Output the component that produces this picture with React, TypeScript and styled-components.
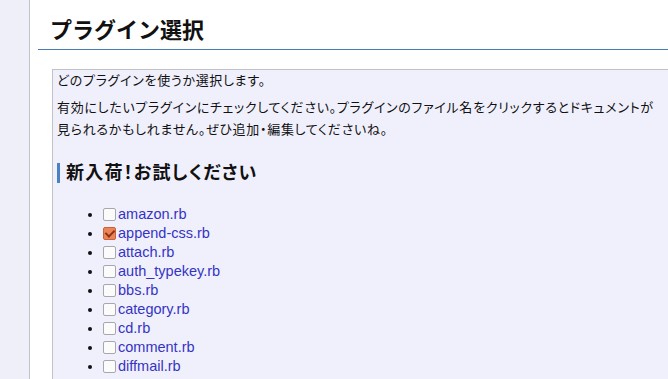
import React, { useState } from 'react';
import styled, { createGlobalStyle } from 'styled-components';

const GlobalStyle = createGlobalStyle`
  html, body {
    margin: 0;
    padding: 0;
    background: #fff;
    overflow: hidden;
  }
  body {
    font-family: "Liberation Sans", "Noto Sans CJK JP", sans-serif;
    font-size: 13px;
    color: #111;
  }
`;

const plugins = [
  'amazon.rb',
  'append-css.rb',
  'attach.rb',
  'auth_typekey.rb',
  'bbs.rb',
  'category.rb',
  'cd.rb',
  'comment.rb',
  'diffmail.rb',
  'disp_referrer.rb',
  'dropdown_calendar.rb',
];

const App = () => {
  const [checked, setChecked] = useState<Record<string, boolean>>({ 'append-css.rb': true });

  const toggle = (name: string) => {
    setChecked({ ...checked, [name]: !checked[name] });
  };

  return (
    <>
      <GlobalStyle />
      <Page>
        <Sidebar />
        <Main>
          <Title>プラグイン選択</Title>
          <Panel>
            <Text>どのプラグインを使うか選択します。</Text>
            <Text>
              有効にしたいプラグインにチェックしてください。プラグインのファイル名をクリックするとドキュメントが見られるかもしれません。ぜひ追加・編集してくださいね。
            </Text>
            <Section>新入荷！お試しください</Section>
            <PluginList>
              {plugins.map((name) => (
                <PluginItem key={name}>
                  <Check
                    type="checkbox"
                    checked={!!checked[name]}
                    onChange={() => toggle(name)}
                  />
                  <PluginLink href="#">{name}</PluginLink>
                </PluginItem>
              ))}
            </PluginList>
          </Panel>
        </Main>
      </Page>
    </>
  );
};

export default App;

const Page = styled.div`
  display: flex;
  height: 100vh;
  overflow: hidden;
`;

const Sidebar = styled.div`
  width: 29px;
  flex: none;
  background: #efeffa;
  border-right: 1px solid #c4c4c8;
`;

const Main = styled.div`
  flex: 1;
  min-width: 0;
  padding-left: 8px;
  overflow: hidden;
`;

const Title = styled.h1`
  margin: 17px 0 0;
  padding: 0 0 4px 12px;
  font-size: 22px;
  line-height: 28px;
  font-weight: bold;
  border-bottom: 1px solid #4a7ab4;
`;

const Panel = styled.div`
  margin: 19px -20px 0 14px;
  padding: 0 4px 20px;
  background: #f0f0fc;
  border: 1px solid #c2c2c6;
`;

const Text = styled.p`
  margin: 0 0 5px;
  line-height: 22px;
  font-size: 13px;
  font-feature-settings: "palt";
  letter-spacing: 0.7px;
  max-width: 606px;
`;

const Section = styled.h3`
  margin: 22px 0 0 0;
  padding-left: 6px;
  border-left: 3px solid #4a80c4;
  font-size: 18px;
  line-height: 20px;
  font-weight: bold;
  font-feature-settings: "palt";
  letter-spacing: 1.2px;
`;

const PluginList = styled.ul`
  margin: 22px 0 0;
  padding-left: 46px;
  list-style: disc;
`;

const PluginItem = styled.li`
  line-height: 19px;
  font-size: 14.5px;
`;

const Check = styled.input`
  appearance: none;
  width: 13px;
  height: 13px;
  margin: 0 2px 0 0;
  vertical-align: -2px;
  border: 1px solid #a8a8ac;
  border-radius: 2px;
  background: #fbfbfb;
  position: relative;

  &:checked {
    background: #ec8458;
    border-color: #c8623c;
  }

  &:checked::after {
    content: '';
    position: absolute;
    left: 3px;
    top: 0px;
    width: 4px;
    height: 7px;
    border: solid #8a3418;
    border-width: 0 2px 2px 0;
    transform: rotate(45deg);
  }
`;

const PluginLink = styled.a`
  color: #3434c4;
  text-decoration: none;
`;
